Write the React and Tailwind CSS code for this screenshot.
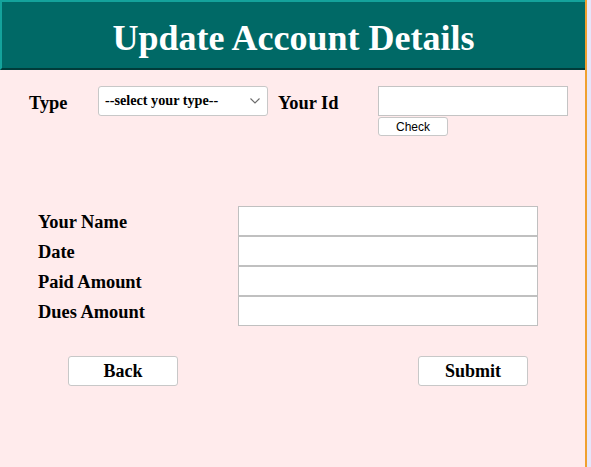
export default function App() {
  const fields = ['Your Name', 'Date', 'Paid Amount', 'Dues Amount']

  return (
    <div className="h-[467px] bg-[#e6e6fa] font-['Liberation_Serif',serif] text-black">
      <div className="w-[587px] h-[467px] bg-[#ffebec] border-r-2 border-[#f0a030]">
        <header className="h-[70px] bg-[#006966] border-t-2 border-l-2 border-[#14a39c] border-b-2 border-b-[#003c3a] pt-[18px] text-center text-white text-[36px] font-bold leading-none">
          Update Account Details
        </header>

        <div className="flex items-start pt-[16px]">
          <div className="ml-[29px] w-[69px] pt-[2px] leading-[30px] text-[18.4px] font-bold">Type</div>
          <div className="w-[170px] h-[30px] flex items-center justify-between bg-white border border-[#c8c8c8] rounded-[3px] pl-[6px] pr-[7px]">
            <span className="text-[14.2px] font-bold">--select your type--</span>
            <svg width="10" height="6" viewBox="0 0 10 6" fill="none" stroke="#6b6b6b" strokeWidth="1.1">
              <path d="M0.5 0.5 L5 5 L9.5 0.5" />
            </svg>
          </div>
          <div className="ml-[10px] w-[100px] pt-[2px] leading-[30px] text-[18.4px] font-bold">Your Id</div>
          <div className="flex flex-col">
            <input
              readOnly
              className="w-[190px] h-[30px] bg-white border border-[#c4c4c4] outline-none"
            />
            <button className="mt-[1px] w-[70px] h-[19px] bg-white border border-[#c8c8c8] rounded-[3px] font-['Liberation_Sans',sans-serif] text-[12px] leading-none">
              Check
            </button>
          </div>
        </div>

        <div className="mt-[70px] pl-[38px]">
          {fields.map((f) => (
            <div key={f} className="flex">
              <div className="w-[200px] h-[30px] pt-[1px] leading-[30px] text-[18.4px] font-bold">{f}</div>
              <input
                readOnly
                className="w-[300px] h-[30px] bg-white border border-[#c0c0c0] outline-none"
              />
            </div>
          ))}
        </div>

        <div className="flex mt-[30px] pl-[68px]">
          <button className="w-[110px] h-[30px] bg-white border border-[#c8c8c8] rounded-[3px] text-[18px] font-bold">
            Back
          </button>
          <button className="ml-[240px] w-[110px] h-[30px] bg-white border border-[#c8c8c8] rounded-[3px] text-[18px] font-bold">
            Submit
          </button>
        </div>
      </div>
    </div>
  )
}
